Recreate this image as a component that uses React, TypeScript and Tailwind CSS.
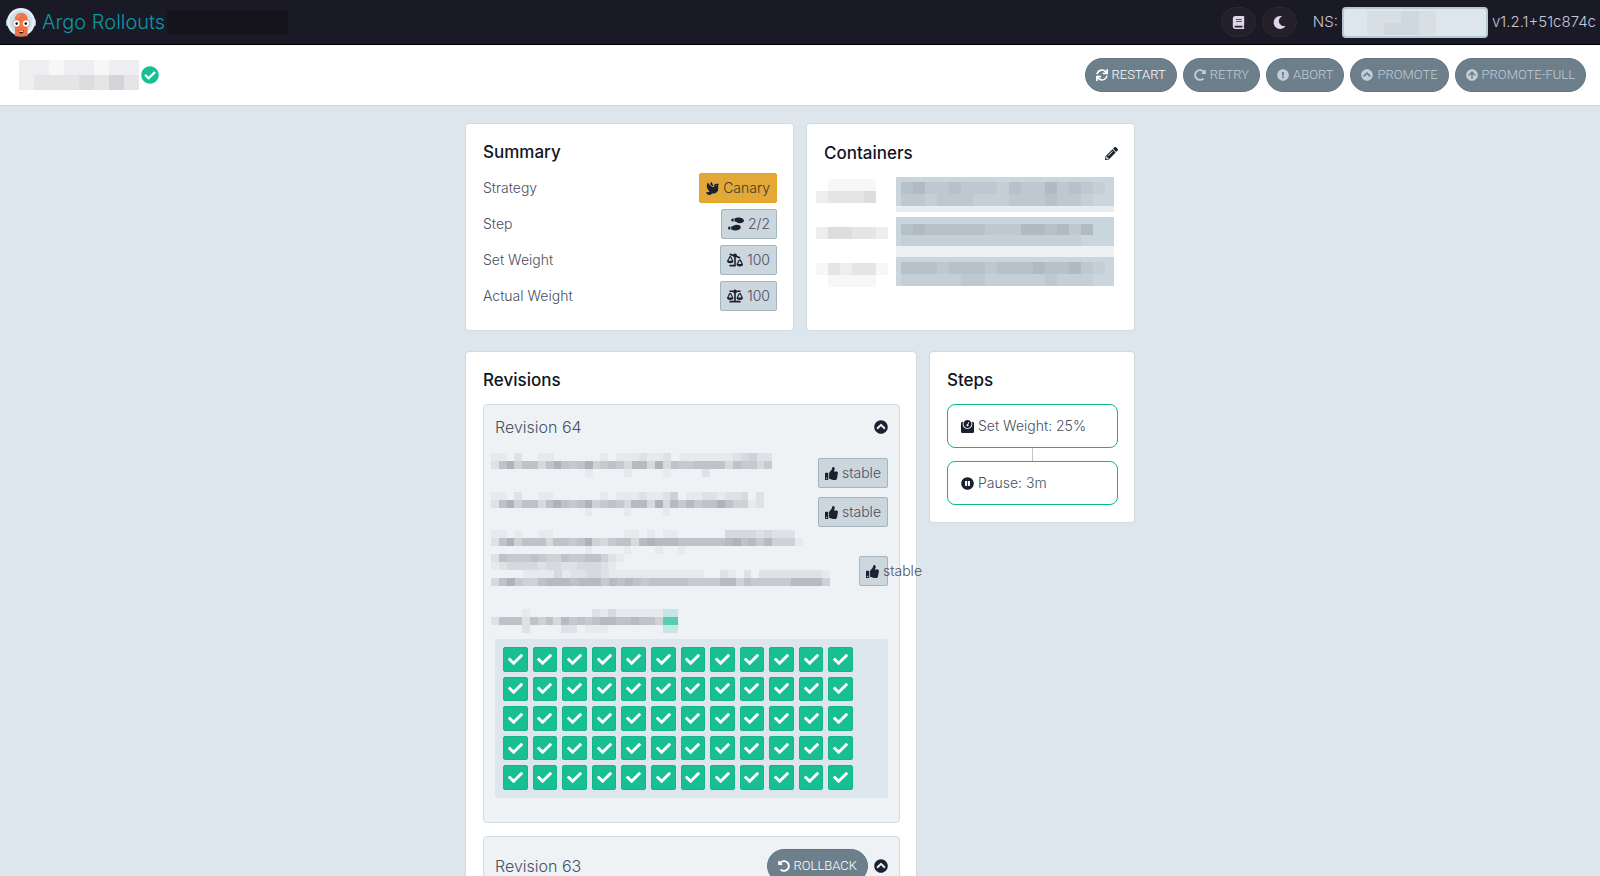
import type { ReactNode } from "react";
import { clsx } from "clsx";
import {
  FaArrowCircleUp,
  FaBalanceScale,
  FaBalanceScaleRight,
  FaBook,
  FaCheck,
  FaCheckCircle,
  FaChevronCircleUp,
  FaDove,
  FaExclamationCircle,
  FaMoon,
  FaPauseCircle,
  FaPencilAlt,
  FaRedoAlt,
  FaShoePrints,
  FaSync,
  FaThumbsUp,
  FaUndoAlt,
  FaWeight,
} from "react-icons/fa";

// Redacted text. Every digit is one cell, higher is darker, "g" and "h" are green.
function Mosaic({ rows, className, cell }: { rows: string[]; className: string; cell: string }) {
  const shade = (c: string) => {
    if (c === "g") return "rgba(24,190,148,0.7)";
    if (c === "h") return "rgba(24,190,148,0.2)";
    return `rgba(40,42,58,${Number(c) * 0.04})`;
  };
  return (
    <div aria-hidden="true" className={clsx("shrink-0", className)}>
      {rows.map((row, y) => (
        <div key={y} className={clsx("flex", cell)}>
          {row.split("").map((c, x) => (
            <span key={x} className="flex-1" style={{ backgroundColor: shade(c) }} />
          ))}
        </div>
      ))}
    </div>
  );
}

function Logo() {
  return (
    <svg viewBox="0 0 30 30" className="size-[30px]" aria-hidden="true">
      <rect x="0" y="12" width="3" height="7" rx="1.5" fill="#9fb9c6" />
      <rect x="27" y="12" width="3" height="7" rx="1.5" fill="#9fb9c6" />
      <circle cx="15" cy="15" r="14" fill="#e6f2f7" />
      <circle cx="15" cy="15" r="11.5" fill="#cbe2ec" />
      <path d="M9 29V12a6.300 6.300 0 0 1 12.600 0V29Q15 30.500 9 29Z" fill="#ee7446" />
      <path d="M11.500 11a4 4 0 0 1 2.500-3" stroke="#f7a283" strokeWidth="1" fill="none" />
      <circle cx="10.500" cy="16.500" r="3.600" fill="#fff" stroke="#d9542b" strokeWidth=".5" />
      <circle cx="20" cy="16.500" r="3.600" fill="#fff" stroke="#d9542b" strokeWidth=".5" />
      <circle cx="10.700" cy="16.600" r="1.300" fill="#151515" />
      <circle cx="19.800" cy="16.600" r="1.300" fill="#151515" />
      <path d="M12.500 23.500q2.700 1.200 5.400 0q-.4 3-2.700 3t-2.700-3Z" fill="#26201f" />
      <path d="M13.200 24q2 .7 4 0v1h-4Z" fill="#fff" />
    </svg>
  );
}

function Card({ className, children }: { className?: string; children: ReactNode }) {
  return (
    <section className={clsx("rounded border border-[#d0dbe1] bg-white pr-4 pl-[17px]", className)}>
      {children}
    </section>
  );
}

function Title({ children }: { children: ReactNode }) {
  return <h3 className="text-[17px] leading-6 font-[450] text-[#0f1524]">{children}</h3>;
}

function Badge({ icon, gold, className, children }: { icon: ReactNode; gold?: boolean; className?: string; children: ReactNode }) {
  return (
    <span
      className={clsx(
        "flex h-[30px] shrink-0 items-center gap-1 rounded-xs border px-1.5 text-sm whitespace-nowrap",
        gold ? "border-[#eaa31c] bg-[#e2a838] text-[#3c3a2c]" : "border-[#a3b5bf] bg-[#ccd6dd]",
        className,
      )}
    >
      <span className="shrink-0 text-[#1b2130]">{icon}</span>
      {children}
    </span>
  );
}

function ActionButton({ icon, disabled, children }: { icon: ReactNode; disabled?: boolean; children: ReactNode }) {
  return (
    <button
      disabled={disabled}
      className="flex h-[34px] items-center gap-1 rounded-full border border-[#60788a] bg-[#6d7f8b] px-2.5 font-['Roboto',sans-serif] text-[13px] font-light text-white disabled:text-[#c3ced6]"
    >
      {icon}
      {children}
    </button>
  );
}

function Collapse() {
  return (
    <button aria-label="Collapse" className="text-[#1b2130]">
      <FaChevronCircleUp size={14} />
    </button>
  );
}

const actions = [
  { label: "RESTART", icon: <FaSync size={12} />, disabled: false },
  { label: "RETRY", icon: <FaRedoAlt size={12} />, disabled: true },
  { label: "ABORT", icon: <FaExclamationCircle size={12} />, disabled: true },
  { label: "PROMOTE", icon: <FaChevronCircleUp size={12} />, disabled: true },
  { label: "PROMOTE-FULL", icon: <FaArrowCircleUp size={12} />, disabled: true },
];

const summary = [
  { label: "Strategy", value: "Canary", icon: <FaDove size={13} />, gold: true },
  { label: "Step", value: "2/2", icon: <FaShoePrints size={16} />, gold: false },
  { label: "Set Weight", value: "100", icon: <FaBalanceScaleRight size={16} />, gold: false },
  { label: "Actual Weight", value: "100", icon: <FaBalanceScale size={16} />, gold: false },
];

const steps = [
  { label: "Set Weight: 25%", icon: <FaWeight size={13} /> },
  { label: "Pause: 3m", icon: <FaPauseCircle size={13} /> },
];

function Header() {
  return (
    <header className="flex h-[45px] shrink-0 items-center border-b border-black bg-[#1a1926] pr-1 pl-1.5 text-[#c9c6d8]">
      <Logo />
      <h1 className="ml-1.5 text-xl font-light text-[#0c97a3]">Argo Rollouts</h1>
      <div className="ml-0.5 h-6 w-[121px] bg-[#15131b]" />
      <div className="ml-auto flex items-center">
        <button aria-label="Documentation" className="flex h-[30px] w-[35px] items-center justify-center rounded-full border border-[#2c2936] bg-[#23202c] text-[#dcd6ea]">
          <FaBook size={13} />
        </button>
        <button aria-label="Dark mode" className="ml-1.5 flex h-[30px] w-[35px] items-center justify-center rounded-full border border-[#2c2936] bg-[#23202c] text-[#dcd6ea]">
          <FaMoon size={13} />
        </button>
        <label htmlFor="ns" className="ml-4 text-[15px]">NS:</label>
        <div className="relative ml-1">
          <input id="ns" className="block h-[31px] w-[146px] rounded border-2 border-[#b5c9d2] bg-[#dee6ed] px-2 text-sm text-[#495763]" />
          <Mosaic rows={["0112100", "0122100"]} cell="h-3" className="pointer-events-none absolute top-1 left-2 w-[120px]" />
        </div>
        <span className="ml-1 text-[15px]">v1.2.1+51c874c</span>
      </div>
    </header>
  );
}

function Containers() {
  return (
    <Card className="flex-1 pt-[17px]">
      <div className="flex items-center justify-between">
        <Title>Containers</Title>
        <button aria-label="Edit containers" className="text-[#1b2130]">
          <FaPencilAlt size={13} />
        </button>
      </div>
      <div className="-ml-2 flex items-start gap-2 pt-3">
        <Mosaic
          rows={["011110", "233340", "000000", "000000", "244332", "000000", "000000", "132331", "011110"]}
          cell="h-3"
          className="mt-0.5 w-[72px]"
        />
        <div className="flex w-[218px] flex-col">
          <div className="h-[29px] bg-[#cad6dd] px-[5px] pt-[5px]">
            <Mosaic rows={["34223222132242321", "22122211122232210"]} cell="h-3" className="w-[204px]" />
          </div>
          <div className="h-1.5 bg-[#e8edef]" />
          <div className="mt-[5px] h-[29px] bg-[#cad6dd] px-[5px] pt-[7px]">
            <Mosaic rows={["34333332224434240", "11111111111111100"]} cell="h-[11px]" className="w-[204px]" />
          </div>
          <div className="h-[11px] bg-[#edf1f3]" />
          <div className="h-[29px] bg-[#cad6dd] px-[5px] pt-[5px]">
            <Mosaic rows={["33323332333433421", "11111221111121110"]} cell="h-3" className="w-[204px]" />
          </div>
        </div>
      </div>
    </Card>
  );
}

function Revision64() {
  return (
    <article className="rounded border border-[#d0dbe1] bg-[#eef2f5] px-[11px]">
      <div className="flex h-11 items-center justify-between">
        <h4 className="text-base font-light">Revision 64</h4>
        <Collapse />
      </div>
      <div className="flex flex-col gap-1 pt-1">
        <div className="flex h-[35px] items-end justify-between">
          <Mosaic
            rows={[
              "110200110000001011121120111111123422",
              "268466368656845653773836556666365535",
              "000000000000100001000010000200000000",
            ]}
            cell="h-2"
            className="-ml-1 w-[281px] self-start"
          />
          <Badge icon={<FaThumbsUp size={13} />}>stable</Badge>
        </div>
        <div className="flex h-[35px] items-end justify-between">
          <Mosaic
            rows={[
              "11020011000000101112112401122122302",
              "26846636865684565377383757566864412",
              "00000000000010000100001000000000000",
            ]}
            cell="h-2"
            className="-ml-1 w-[273px] self-start"
          />
          <Badge icon={<FaThumbsUp size={13} />}>stable</Badge>
        </div>
        <div className="flex h-[55px] items-end justify-between">
          <div className="-ml-1 flex flex-col">
            <Mosaic
              rows={[
                "1101001100000000011010110000003333232220",
                "2684666366568435663787776666667867574441",
                "0000000000001000010001001000000000000000",
              ]}
              cell="h-2"
              className="w-[312px]"
            />
            <Mosaic rows={["26555654465566421", "12333323322333210"]} cell="h-2" className="w-[133px]" />
            <Mosaic
              rows={[
                "0000111131223321111111111110021020222222221",
                "3685446777677757676566666555577465555577774",
              ]}
              cell="h-2"
              className="w-[339px]"
            />
          </div>
          <Badge icon={<FaThumbsUp size={13} />} className="w-[29px]">stable</Badge>
        </div>
        <Mosaic
          rows={["0000100000000213111111hh", "2666264637565677667664gg", "0000200002201110000000hh"]}
          cell="h-2"
          className="-ml-1 mt-[19px] w-[187px]"
        />
      </div>
      <div className="mt-1.5 mb-6 rounded-xs bg-[#dee6ed] p-2">
        <div className="grid h-[143px] w-[350px] grid-cols-12 grid-rows-5 gap-[5px]">
          {Array.from({ length: 60 }, (_, i) => (
            <div key={i} className="flex items-center justify-center rounded-xs border border-[#16b48a] bg-[#18be94] text-white">
              <FaCheck size={15} />
            </div>
          ))}
        </div>
      </div>
    </article>
  );
}

export default function App() {
  return (
    <div className="flex h-screen flex-col overflow-hidden bg-[#dee6ed] font-['Inter',sans-serif] text-sm font-light text-[#495061]">
      <Header />
      <div className="flex h-[61px] shrink-0 items-center border-b border-[#ccd6dd] bg-white pr-3.5 pl-1">
        <Mosaic rows={["022122122", "023334353"]} cell="h-[15px]" className="w-[135px]" />
        <FaCheckCircle size={18} className="ml-0.5 text-[#18be94]" />
        <div className="ml-auto flex gap-1.5">
          {actions.map((a) => (
            <ActionButton key={a.label} icon={a.icon} disabled={a.disabled}>
              {a.label}
            </ActionButton>
          ))}
        </div>
      </div>

      <main className="mx-auto w-full max-w-[670px] pt-[17px]">
        <div className="flex gap-3">
          <Card className="flex-1 pt-4 pb-[19px]">
            <Title>Summary</Title>
            <dl className="mt-[9px] flex flex-col gap-1.5">
              {summary.map((item) => (
                <div key={item.label} className="flex items-center justify-between">
                  <dt>{item.label}</dt>
                  <dd>
                    <Badge icon={item.icon} gold={item.gold}>{item.value}</Badge>
                  </dd>
                </div>
              ))}
            </dl>
          </Card>
          <Containers />
        </div>

        <div className="mt-5 flex items-start gap-3">
          <Card className="w-[452px] pt-4 pb-4">
            <Title>Revisions</Title>
            <div className="mt-3 flex flex-col gap-[13px]">
              <Revision64 />
              <article className="flex h-[60px] items-center justify-between rounded border border-[#d0dbe1] bg-[#eef2f5] px-[11px]">
                <h4 className="text-base font-light">Revision 63</h4>
                <div className="flex items-center gap-1.5">
                  <ActionButton icon={<FaUndoAlt size={12} />}>ROLLBACK</ActionButton>
                  <Collapse />
                </div>
              </article>
            </div>
          </Card>
          <Card className="flex-1 pt-4 pb-[17px]">
            <Title>Steps</Title>
            <ol className="mt-3">
              {steps.map((step, i) => (
                <li key={step.label}>
                  {i > 0 && <div className="mx-auto h-[13px] w-px bg-[#b9c6cf]" />}
                  <div className="flex h-11 items-center gap-1 rounded-lg border border-[#10b78b] px-[13px]">
                    <span className="text-[#1b2130]">{step.icon}</span>
                    {step.label}
                  </div>
                </li>
              ))}
            </ol>
          </Card>
        </div>
      </main>
    </div>
  );
}
